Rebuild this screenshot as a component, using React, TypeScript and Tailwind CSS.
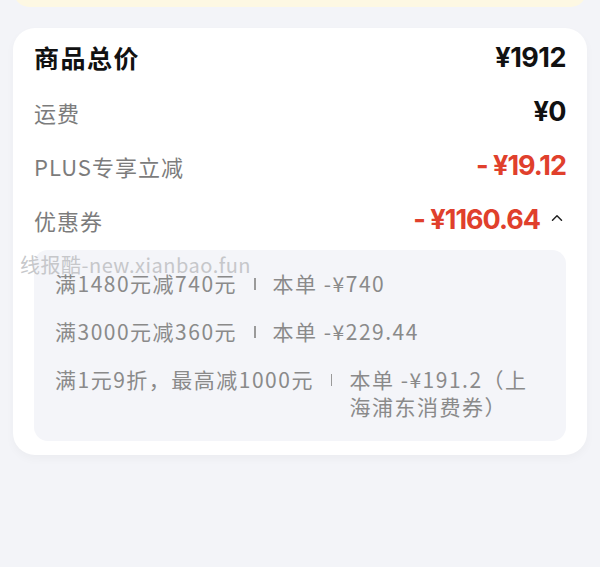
import { ChevronUp } from 'lucide-react';

const cjk = { fontFamily: '"Noto Sans CJK SC", "Noto Sans", sans-serif' };
const num = { fontFamily: 'Inter, "Noto Sans CJK SC", sans-serif' };

type Coupon = { rule: string; saved: string };

const coupons: Coupon[] = [
  { rule: '满1480元减740元', saved: '本单 -¥740' },
  { rule: '满3000元减360元', saved: '本单 -¥229.44' },
  { rule: '满1元9折，最高减1000元', saved: '本单 -¥191.2（上海浦东消费券）' },
];

function Row({ label, value, red, big }: { label: string; value: string; red?: boolean; big?: boolean }) {
  return (
    <div className="h-[54px] flex items-center justify-between">
      <span
        className={big ? 'text-[25px] font-bold text-[#111] tracking-[1.5px]' : 'text-[22px] text-[#7c7c7c] tracking-[1px]'}
        style={cjk}
      >
        {label}
      </span>
      <span
        className={`text-[27px] font-bold ${red ? 'text-[#e0402c] tracking-[-1px]' : 'text-[#111] tracking-[-0.5px]'}`}
        style={num}
      >
        {value}
      </span>
    </div>
  );
}

export default function App() {
  return (
    <div className="min-h-[567px] bg-[#f3f4f8] overflow-hidden" style={cjk}>
      {/* Yellow tip banner, mostly scrolled off */}
      <div className="mx-[14px] -mt-[23px] h-[30px] rounded-2xl bg-[#fdf8e3]" />

      <div className="relative mx-[13px] mt-[21px] bg-white rounded-[22px] px-[21px] pt-[3px] pb-[14px] shadow-[0_4px_10px_rgba(0,0,0,0.03)]">
        <Row label="商品总价" value="¥1912" big />
        <Row label="运费" value="¥0" />
        <Row label="PLUS专享立减" value="- ¥19.12" red />

        <div className="h-[54px] flex items-center justify-between">
          <span className="text-[22px] text-[#7c7c7c] tracking-[1px]">优惠券</span>
          <div className="flex items-center gap-[8px]">
            <span className="text-[27px] font-bold tracking-[-1px] text-[#e0402c]" style={num}>
              - ¥1160.64
            </span>
            <ChevronUp size={18} strokeWidth={2} className="text-[#222] -mt-[4px]" />
          </div>
        </div>

        {/* Coupon breakdown */}
        <div className="mt-[3px] bg-[#f4f5f9] rounded-[14px] pl-[21px] pr-[22px] pt-[20px] pb-[21px] flex flex-col gap-[21px]">
          {coupons.map((c) => (
            <div key={c.rule} className="flex items-start text-[21px] leading-[27px] text-[#8a8a8a] tracking-[1.5px]">
              <span className="shrink-0">{c.rule}</span>
              <span
                className={`shrink-0 mx-[17px] h-[27px] flex items-center ${c.rule.length > 14 ? 'self-end' : ''}`}
              >
                <span className="block w-[1.5px] h-[12px] bg-[#9a9a9a]" />
              </span>
              <span className="min-w-0">{c.saved}</span>
            </div>
          ))}
        </div>

        {/* watermark */}
        <div
          className="absolute left-[7px] top-[222px] text-[20px] text-[#c6c7ca] tracking-[0.5px] pointer-events-none"
          style={cjk}
        >
          线报酷-new.xianbao.fun
        </div>
      </div>
    </div>
  );
}
